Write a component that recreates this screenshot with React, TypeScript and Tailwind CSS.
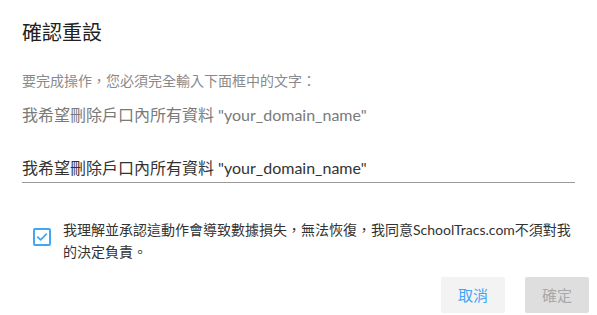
const checkText =
  "我理解並承認這動作會導致數據損失，無法恢復，我同意SchoolTracs.com不須對我的決定負責。";

export default function App() {
  return (
    <div
      className="w-[597px] h-[315px] bg-white overflow-hidden"
      style={{ fontFamily: 'Lato, "Noto Sans CJK TC", sans-serif' }}
    >
      <div className="px-[22px] pt-[18px]">
        <h2 className="text-[20px] leading-[28px] text-[#212121]">確認重設</h2>

        <p className="mt-[25px] text-[14px] leading-[20px] text-[#8a8a8a]">
          要完成操作，您必須完全輸入下面框中的文字：
        </p>
        <p className="mt-[12px] text-[16px] leading-[24px] text-[#7a7a7a]">
          我希望刪除戶口內所有資料 "your_domain_name"
        </p>

        <div className="mt-[29px] border-b border-[#9a9a9a] pb-[2px] text-[16px] leading-[24px] text-[#333]">
          我希望刪除戶口內所有資料 "your_domain_name"
        </div>

        <label className="mt-[36px] flex items-start gap-[12px] pl-[11px]">
          <span className="mt-[9px] flex h-[18px] w-[18px] shrink-0 items-center justify-center rounded-[2px] border-2 border-[#42a5f5] bg-white">
            <svg viewBox="0 0 14 14" className="h-[12px] w-[12px]" fill="none">
              <path
                d="M2 7.2 L5.4 10.4 L12 3.6"
                stroke="#42a5f5"
                strokeWidth="2"
                strokeLinecap="round"
                strokeLinejoin="round"
              />
            </svg>
          </span>
          <span className="text-[14px] leading-[22px] text-[#333]">{checkText}</span>
        </label>
      </div>

      <div className="mt-[14px] flex justify-end gap-[20px] pr-[8px]">
        <button className="h-[36px] w-[64px] rounded-[2px] bg-[#f3f3f3] text-[15px] text-[#42a5f5]">
          取消
        </button>
        <button className="h-[36px] w-[64px] rounded-[2px] bg-[#dedede] text-[15px] text-[#a8a8a8]">
          確定
        </button>
      </div>
    </div>
  );
}
